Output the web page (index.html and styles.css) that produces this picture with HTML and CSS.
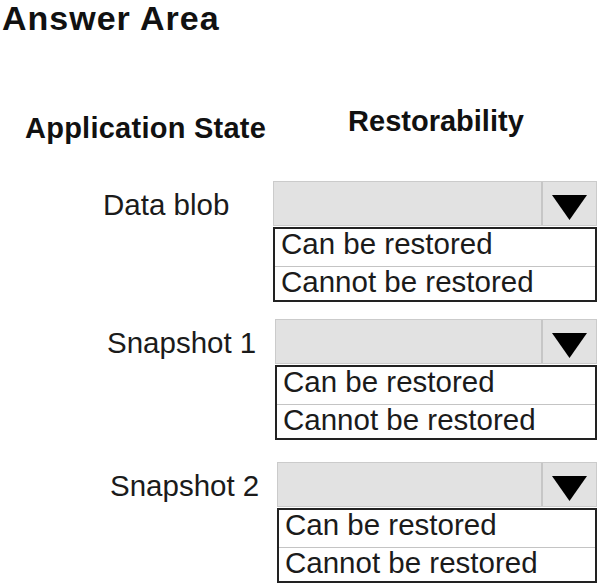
FILE: index.html
```html
<!DOCTYPE html>
<html lang="en">
<head>
<meta charset="utf-8">
<title>Answer Area</title>
<link rel="stylesheet" href="styles.css">
</head>
<body>
<div class="page">
  <h1 class="title">Answer Area</h1>
  <div class="heads">
    <div class="head head-app">Application State</div>
    <div class="head head-rest">Restorability</div>
  </div>

  <div class="row row-1">
    <div class="label label-1">Data blob</div>
    <div class="dd">
      <div class="select">
        <span class="arrow-cell">
          <svg class="arrow" width="35" height="25" viewBox="0 0 35 25"><polygon points="0,0 35,0 17.5,25" fill="#000"/></svg>
        </span>
      </div>
      <ul class="options">
        <li class="opt">Can be restored</li>
        <li class="opt">Cannot be restored</li>
      </ul>
    </div>
  </div>

  <div class="row row-2">
    <div class="label label-2">Snapshot 1</div>
    <div class="dd dd-2">
      <div class="select">
        <span class="arrow-cell">
          <svg class="arrow" width="35" height="25" viewBox="0 0 35 25"><polygon points="0,0 35,0 17.5,25" fill="#000"/></svg>
        </span>
      </div>
      <ul class="options">
        <li class="opt">Can be restored</li>
        <li class="opt">Cannot be restored</li>
      </ul>
    </div>
  </div>

  <div class="row row-3">
    <div class="label label-3">Snapshot 2</div>
    <div class="dd dd-3">
      <div class="select">
        <span class="arrow-cell">
          <svg class="arrow" width="35" height="25" viewBox="0 0 35 25"><polygon points="0,0 35,0 17.5,25" fill="#000"/></svg>
        </span>
      </div>
      <ul class="options">
        <li class="opt">Can be restored</li>
        <li class="opt">Cannot be restored</li>
      </ul>
    </div>
  </div>
</div>
</body>
</html>
```

FILE: styles.css
```css
html, body {
  margin: 0;
  padding: 0;
  background: #fff;
}
body {
  font-family: "Liberation Sans", Arial, sans-serif;
  color: #1b1b1b;
  width: 602px;
  height: 584px;
  overflow: hidden;
}
.page {
  padding: 0 0 0 2px;
}
.title {
  margin: 0;
  font-size: 34px;
  line-height: 37px;
  font-weight: bold;
  letter-spacing: 1px;
  color: #111;
}
.heads {
  display: flex;
  align-items: flex-start;
  gap: 82px;
  margin-top: 67px;
  padding-left: 23px;
}
.head {
  font-size: 29px;
  line-height: 34px;
  font-weight: bold;
  color: #111;
}
.head-app {
  padding-top: 7px;
  letter-spacing: 0.25px;
}
.row {
  display: grid;
  grid-template-columns: 271px 324px;
  align-items: start;
}
.row-1 { margin-top: 36px; }
.row-2 { margin-top: 17px; }
.row-3 { margin-top: 22px; }
.label {
  height: 45px;
  display: flex;
  align-items: center;
  font-size: 29.5px;
  padding-top: 2px;
  box-sizing: border-box;
}
.label-1 { padding-left: 101px; }
.label-2 { padding-left: 105px; }
.label-3 { padding-left: 108px; }
.dd-2 { margin-left: 2px; }
.dd-3 { margin-left: 4px; }
.select {
  box-sizing: border-box;
  height: 45px;
  background: #e2e2e2;
  border: 1px solid #cbcbcb;
  display: flex;
  justify-content: flex-end;
}
.arrow-cell {
  width: 55px;
  border-left: 2px solid #c6c6c6;
  display: flex;
  justify-content: center;
  padding-top: 13px;
  box-sizing: border-box;
}
.arrow {
  display: block;
}
.options {
  list-style: none;
  margin: 1px 0 0 0;
  padding: 0;
  border: 2px solid #222;
  box-sizing: border-box;
  height: 75px;
  display: flex;
  flex-direction: column;
}
.opt {
  font-size: 29.5px;
  line-height: 30px;
  padding-left: 6px;
  color: #1b1b1b;
}
.opt:first-child {
  height: 37px;
  border-bottom: 1px solid #c4c4c4;
}
.opt:last-child {
  height: 33px;
}
```
